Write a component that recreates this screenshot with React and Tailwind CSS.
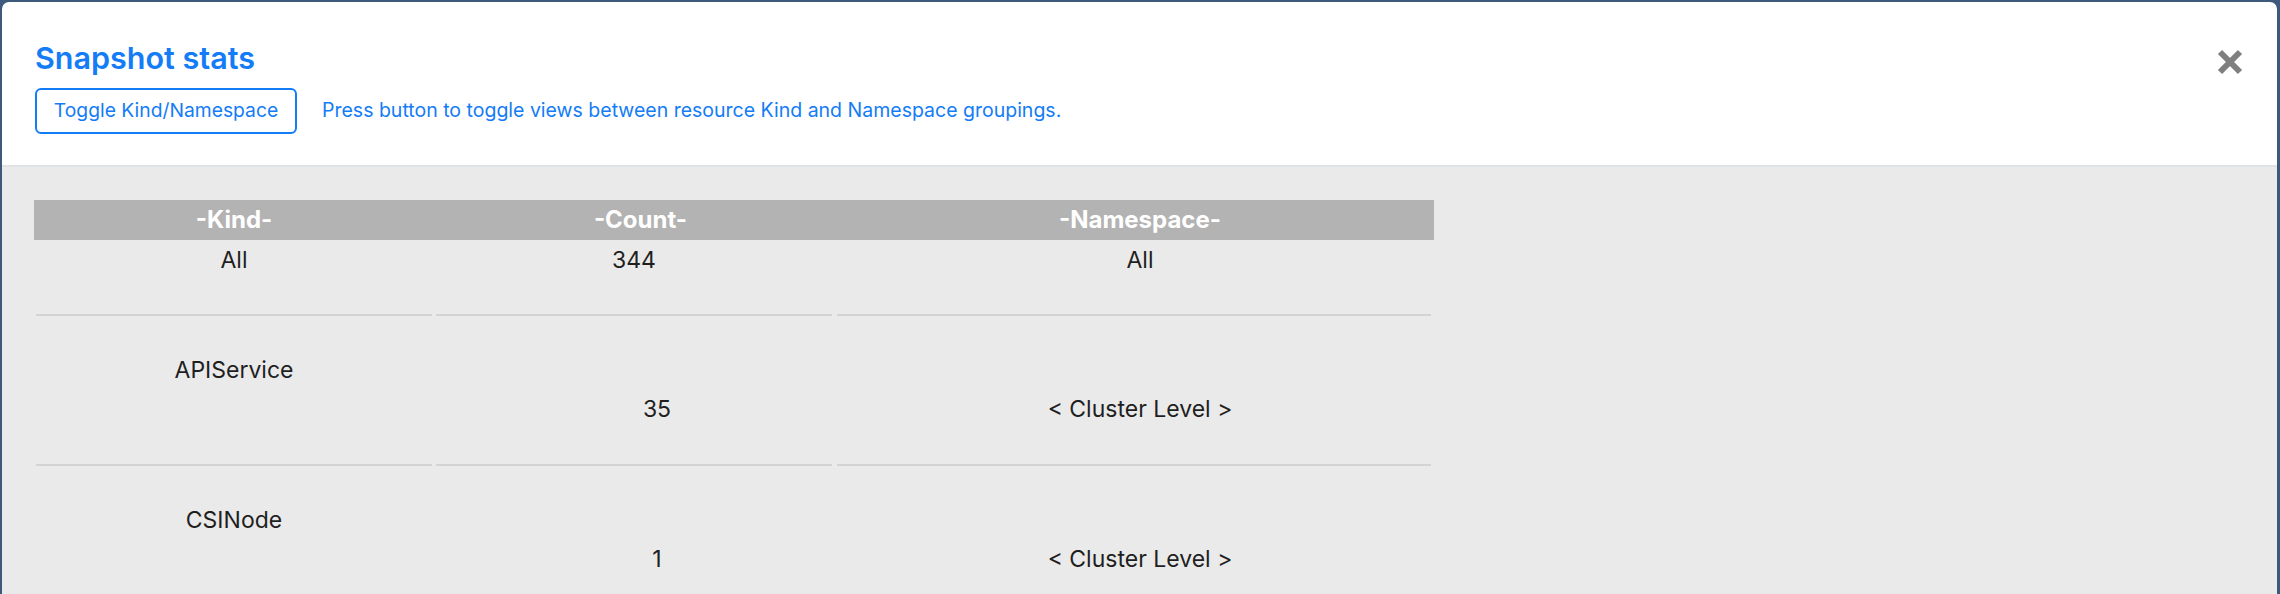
const rows = [
  { kind: "All", count: "344", ns: "All", top: true },
  { kind: "APIService", count: "35", ns: "< Cluster Level >" },
  { kind: "CSINode", count: "1", ns: "< Cluster Level >" },
];

function CloseIcon() {
  return (
    <svg width="26" height="26" viewBox="0 0 26 26" aria-hidden="true">
      <path d="M3 3 L23 23 M23 3 L3 23" stroke="#7f7f7f" strokeWidth="6" fill="none" />
    </svg>
  );
}

function Row({ row }) {
  const line = "h-[2px] bg-[#d3d3d3]";
  if (row.top) {
    return (
      <div className="grid grid-cols-[400px_400px_600px]">
        <div className="flex flex-col">
          <div className="h-[74px] pt-[9px] text-center">{row.kind}</div>
          <div className={`${line} mx-[2px]`} />
        </div>
        <div className="flex flex-col">
          <div className="h-[74px] pt-[9px] text-center">{row.count}</div>
          <div className={`${line} mx-[2px]`} />
        </div>
        <div className="flex flex-col">
          <div className="h-[74px] pt-[9px] pl-[12px] text-center">{row.ns}</div>
          <div className={`${line} mx-[3px]`} />
        </div>
      </div>
    );
  }
  return (
    <div className="grid grid-cols-[400px_400px_600px]">
      <div className="flex flex-col">
        <div className="h-[148px] pt-[43px] text-center">{row.kind}</div>
        <div className={`${line} mx-[2px]`} />
      </div>
      <div className="flex flex-col">
        <div className="h-[148px] pt-[82px] pl-[46px] text-center">{row.count}</div>
        <div className={`${line} mx-[2px]`} />
      </div>
      <div className="flex flex-col">
        <div className="h-[148px] pt-[82px] pl-[12px] text-center">{row.ns}</div>
        <div className={`${line} mx-[3px]`} />
      </div>
    </div>
  );
}

export default function App() {
  return (
    <div
      className="h-[594px] overflow-hidden bg-[#3d5a7c] pt-[2px] pl-[2px] pr-[3px]"
      style={{ fontFamily: "Inter, 'Noto Sans', sans-serif" }}
    >
      <div className="h-full flex flex-col bg-white rounded-t-[7px] overflow-hidden">
        <header className="h-[165px] shrink-0 border-b-2 border-[#dfe3e6] flex justify-between pl-[33px] pr-[34px] pt-[41px]">
          <div>
            <h2 className="text-[30.5px] leading-none font-semibold text-[#137cf6]">
              Snapshot stats
            </h2>
            <div className="mt-[14px] flex items-center gap-[25px]">
              <button className="w-[262px] h-[46px] border-2 border-[#137cf6] rounded-[6px] text-[19.3px] text-[#137cf6] flex items-center justify-center">
                Toggle Kind/Namespace
              </button>
              <p className="text-[19.5px] text-[#137cf6]">
                Press button to toggle views between resource Kind and Namespace groupings.
              </p>
            </div>
          </div>
          <button className="mt-[6px] self-start" aria-label="Close">
            <CloseIcon />
          </button>
        </header>
        <div className="flex-1 bg-[#eaeaea] pl-[32px] pt-[33px]">
          <div className="w-[1400px]">
            <div className="grid grid-cols-[400px_400px_600px] h-[40px] bg-[#b3b3b3] text-white font-bold text-[24px] items-center">
              <div className="text-center">-Kind-</div>
              <div className="text-center pl-[13px]">-Count-</div>
              <div className="text-center pl-[12px]">-Namespace-</div>
            </div>
            <div className="text-[23px] leading-none text-[#1f1f1f]">
              {rows.map((r) => (
                <Row key={r.kind} row={r} />
              ))}
            </div>
          </div>
        </div>
      </div>
    </div>
  );
}
